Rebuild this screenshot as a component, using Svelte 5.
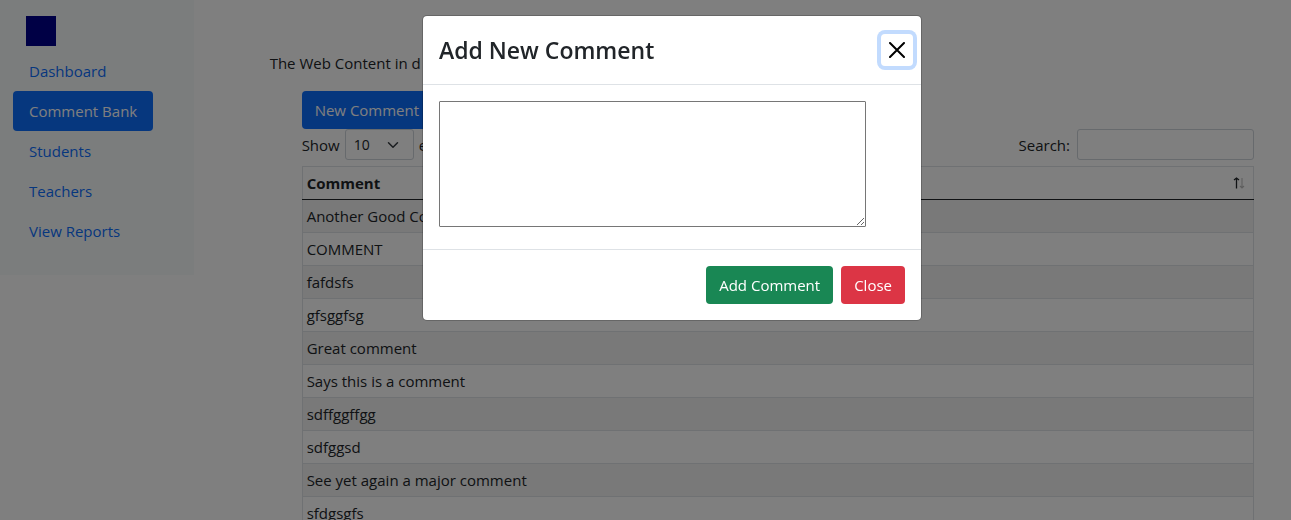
<script>
  const links = ['Dashboard', 'Comment Bank', 'Students', 'Teachers', 'View Reports'];
  const active = 'Comment Bank';
  const comments = [
    'Another Good Comment',
    'COMMENT',
    'fafdsfs',
    'gfsggfsg',
    'Great comment',
    'Says this is a comment',
    'sdffggffgg',
    'sdfggsd',
    'See yet again a major comment',
    'sfdgsgfs'
  ];
  let open = $state(true);
</script>

<div class="page">
  <aside class="sidebar">
    <div class="logo"></div>
    <nav>
      {#each links as link}
        <a href="#top" class:active={link === active}>{link}</a>
      {/each}
    </nav>
  </aside>

  <main>
    <p class="intro">The Web Content in d</p>
    <section class="bank">
      <button class="btn primary" onclick={() => (open = true)}>New Comment</button>
      <div class="tools">
        <label class="length">
          Show
          <span class="picker">
            <select>
              <option>10</option>
              <option>25</option>
              <option>50</option>
            </select>
            <svg viewBox="0 0 16 16" width="12" height="12" aria-hidden="true">
              <path d="M2 5l6 6 6-6" fill="none" stroke="#343a40" stroke-width="2" stroke-linecap="round" stroke-linejoin="round" />
            </svg>
          </span>
          entries
        </label>
        <label class="search">Search: <input type="search" /></label>
      </div>
      <table>
        <thead>
          <tr>
            <th>
              <div class="head">
                Comment
                <svg class="sort" viewBox="0 0 12 12" width="12" height="12" aria-hidden="true">
                  <path d="M3.5 11.5V1M1 3L3.5 1L6 3" fill="none" stroke="#212529" stroke-width="1.3" />
                  <path d="M9 1V11M7 9L9 11L11 9" fill="none" stroke="#bcbcbc" stroke-width="1.1" />
                </svg>
              </div>
            </th>
          </tr>
        </thead>
        <tbody>
          {#each comments as comment}
            <tr><td>{comment}</td></tr>
          {/each}
        </tbody>
      </table>
    </section>
  </main>
</div>

{#if open}
  <div class="backdrop">
    <div class="modal" role="dialog" aria-modal="true" aria-labelledby="modal-title">
      <header>
        <h2 id="modal-title">Add New Comment</h2>
        <button class="dismiss" aria-label="Close" onclick={() => (open = false)}>
          <svg viewBox="0 0 16 16" width="16" height="16" aria-hidden="true">
            <path d="M1 1l14 14M15 1L1 15" fill="none" stroke="#000" stroke-width="2" stroke-linecap="round" />
          </svg>
        </button>
      </header>
      <div class="body">
        <textarea aria-label="Comment"></textarea>
      </div>
      <footer>
        <button class="btn success">Add Comment</button>
        <button class="btn danger" onclick={() => (open = false)}>Close</button>
      </footer>
    </div>
  </div>
{/if}

<style>
  :global(body) {
    margin: 0;
    overflow: hidden;
    background: #fff;
    color: #212529;
    font: 15px/24px "Open Sans", "Noto Sans", sans-serif;
  }
  :global(*) {
    box-sizing: border-box;
  }
  button,
  input,
  select,
  textarea {
    font: inherit;
    color: inherit;
    margin: 0;
  }
  .page {
    display: flex;
    align-items: flex-start;
  }
  .sidebar {
    width: 15%;
    padding: 16px 13px 24px;
    background: #f7fbfa;
  }
  .logo {
    width: 30px;
    height: 30px;
    margin: 0 13px 5px;
    background: #00008b;
  }
  nav {
    display: flex;
    flex-direction: column;
    width: fit-content;
  }
  nav a {
    padding: 8px 16px;
    border-radius: 4px;
    color: #0d6efd;
    text-decoration: none;
  }
  nav a.active {
    background: #0d6efd;
    color: #fff;
  }
  main {
    flex: 1;
    padding: 51px 37px 0 76px;
  }
  .intro {
    margin: 0 0 16px;
  }
  .bank {
    padding-left: 32px;
  }
  .btn {
    padding: 6px 12px;
    border: 1px solid transparent;
    border-radius: 4px;
    color: #fff;
    cursor: pointer;
  }
  .primary {
    display: block;
    background: #0d6efd;
  }
  .success {
    background: #198754;
  }
  .danger {
    background: #dc3545;
  }
  .tools {
    display: flex;
    justify-content: space-between;
    margin-bottom: 6px;
  }
  .tools label {
    display: flex;
    align-items: center;
  }
  .length {
    gap: 5px;
  }
  .search {
    gap: 7px;
  }
  .picker {
    display: grid;
    align-items: center;
  }
  .picker > * {
    grid-area: 1 / 1;
  }
  .picker svg {
    justify-self: end;
    margin-right: 15px;
    pointer-events: none;
  }
  select,
  input {
    height: 31px;
    border: 1px solid #ced4da;
    border-radius: 3px;
    background: #fff;
    font-size: 14px;
    padding: 4px 8px;
    line-height: 21px;
    appearance: none;
  }
  select {
    width: 69px;
  }
  input {
    width: 177px;
  }
  table {
    width: 100%;
    border-collapse: collapse;
    border: 1px solid #dee2e6;
  }
  th,
  td {
    padding: 4px;
    text-align: left;
    border: 1px solid #dee2e6;
  }
  th {
    border-bottom-color: #212529;
  }
  .head {
    display: flex;
    align-items: center;
    justify-content: space-between;
    padding-right: 4px;
  }
  tbody tr:nth-child(odd) {
    background: #f2f2f2;
  }
  .backdrop {
    position: fixed;
    inset: 0;
    padding: 15px 0 0 53px;
    background: rgba(0, 0, 0, 0.5);
  }
  .modal {
    max-width: 500px;
    margin: 0 auto;
    border: 1px solid rgba(0, 0, 0, 0.2);
    border-radius: 5px;
    background: #fff;
    background-clip: padding-box;
  }
  header {
    display: flex;
    align-items: center;
    justify-content: space-between;
    padding: 16px;
    border-bottom: 1px solid #dee2e6;
  }
  h2 {
    margin: 0;
    font-size: 23px;
    font-weight: 600;
    line-height: 36px;
  }
  .dismiss {
    display: flex;
    margin: -8px;
    padding: 8px;
    border: 0;
    border-radius: 4px;
    background: #fff;
    box-shadow: 0 0 0 4px #c2dbfe;
    cursor: pointer;
  }
  .body {
    padding: 16px 16px 22px;
  }
  textarea {
    display: block;
    width: 427px;
    max-width: 100%;
    height: 126px;
    padding: 2px;
    border: 1px solid #767676;
    border-radius: 1px;
    background: #fff;
  }
  footer {
    display: flex;
    justify-content: flex-end;
    gap: 8px;
    padding: 16px;
    border-top: 1px solid #dee2e6;
  }
</style>
